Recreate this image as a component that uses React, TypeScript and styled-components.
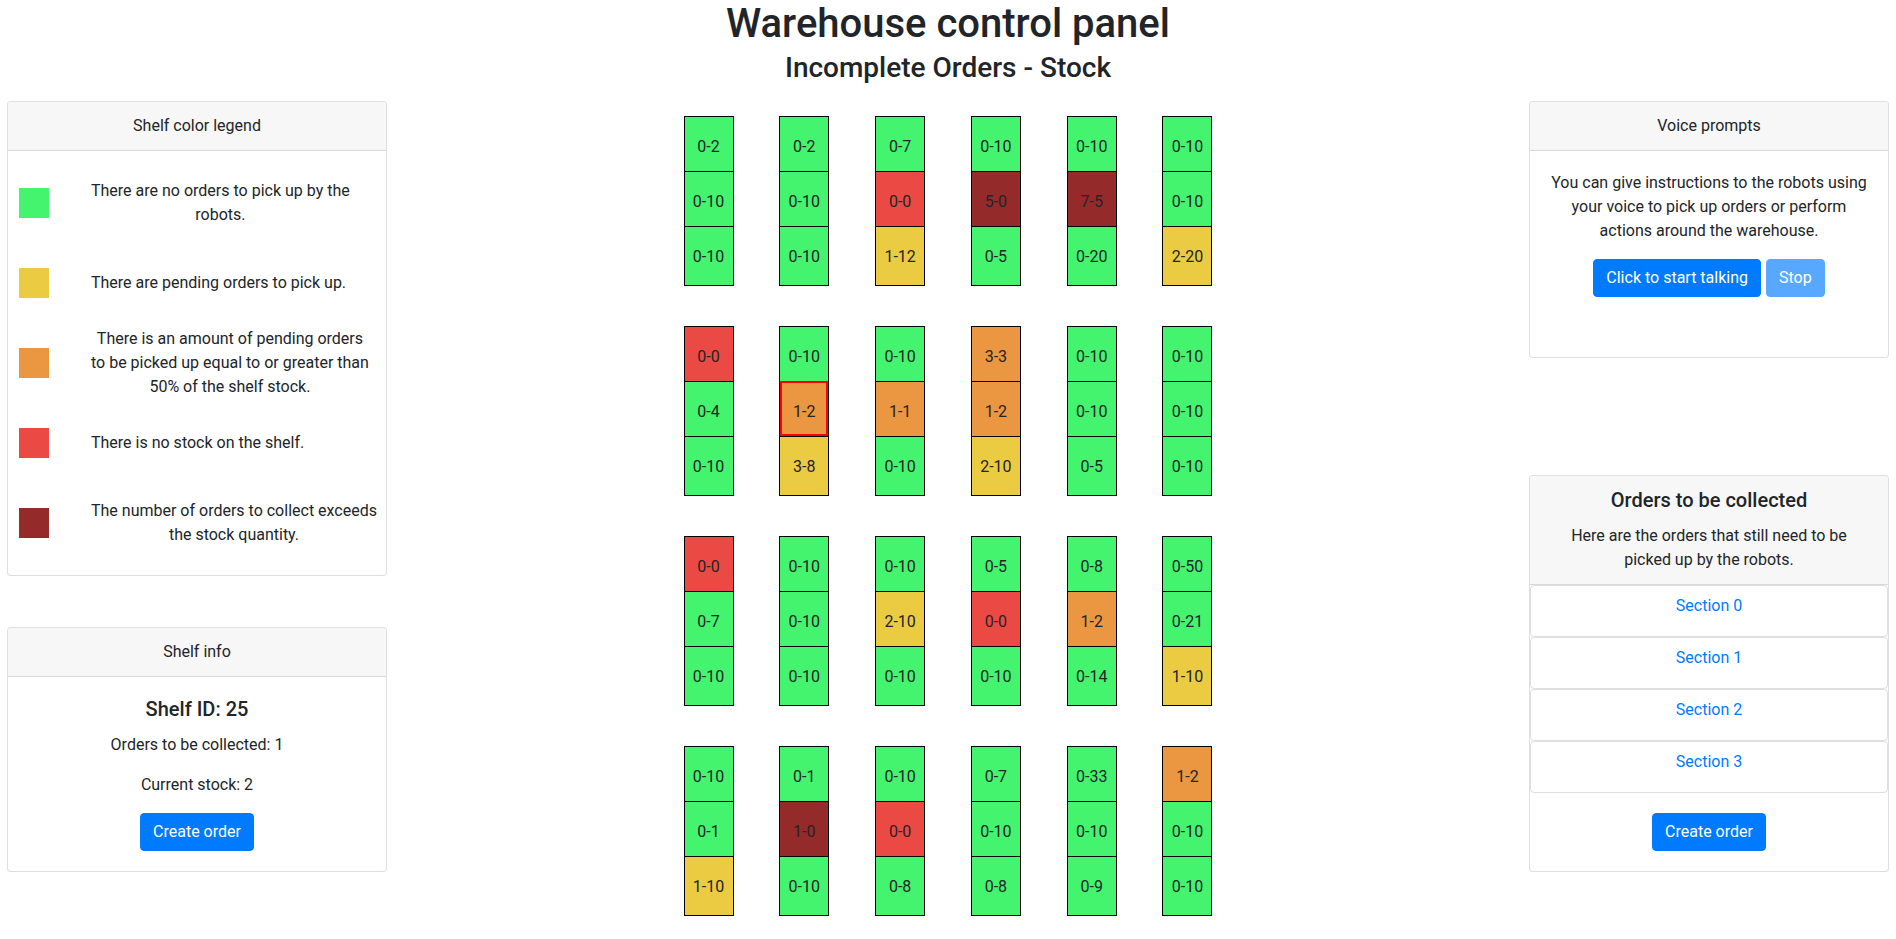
import React from "react";
import styled, { createGlobalStyle } from "styled-components";

const GlobalStyle = createGlobalStyle`
  html, body {
    margin: 0;
    padding: 0;
    background: #ffffff;
  }
  body {
    font-family: "Segoe UI", Roboto, "Liberation Sans", sans-serif;
    font-size: 16px;
    line-height: 24px;
    color: #212529;
  }
  * {
    box-sizing: border-box;
  }
`;

const COLORS = {
  green: "#44f46e",
  yellow: "#ebcb42",
  orange: "#eb9641",
  red: "#eb4943",
  darkRed: "#952a2b",
};

// [orders, stock] for each shelf: block -> column -> cell
const SHELVES: [number, number][][][] = [
  [
    [[0, 2], [0, 10], [0, 10]],
    [[0, 2], [0, 10], [0, 10]],
    [[0, 7], [0, 0], [1, 12]],
    [[0, 10], [5, 0], [0, 5]],
    [[0, 10], [7, 5], [0, 20]],
    [[0, 10], [0, 10], [2, 20]],
  ],
  [
    [[0, 0], [0, 4], [0, 10]],
    [[0, 10], [1, 2], [3, 8]],
    [[0, 10], [1, 1], [0, 10]],
    [[3, 3], [1, 2], [2, 10]],
    [[0, 10], [0, 10], [0, 5]],
    [[0, 10], [0, 10], [0, 10]],
  ],
  [
    [[0, 0], [0, 7], [0, 10]],
    [[0, 10], [0, 10], [0, 10]],
    [[0, 10], [2, 10], [0, 10]],
    [[0, 5], [0, 0], [0, 10]],
    [[0, 8], [1, 2], [0, 14]],
    [[0, 50], [0, 21], [1, 10]],
  ],
  [
    [[0, 10], [0, 1], [1, 10]],
    [[0, 1], [1, 0], [0, 10]],
    [[0, 10], [0, 0], [0, 8]],
    [[0, 7], [0, 10], [0, 8]],
    [[0, 33], [0, 10], [0, 9]],
    [[1, 2], [0, 10], [0, 10]],
  ],
];

const shelfColor = (orders: number, stock: number) => {
  if (orders > stock) return COLORS.darkRed;
  if (stock === 0) return COLORS.red;
  if (orders === 0) return COLORS.green;
  if (orders * 2 >= stock) return COLORS.orange;
  return COLORS.yellow;
};

const LEGEND = [
  { color: COLORS.green, lines: ["There are no orders to pick up by the", "robots."] },
  { color: COLORS.yellow, lines: ["There are pending orders to pick up."] },
  {
    color: COLORS.orange,
    lines: [
      "There is an amount of pending orders",
      "to be picked up equal to or greater than",
      "50% of the shelf stock.",
    ],
  },
  { color: COLORS.red, lines: ["There is no stock on the shelf."] },
  {
    color: COLORS.darkRed,
    lines: ["The number of orders to collect exceeds", "the stock quantity."],
  },
];

const VOICE_LINES = [
  "You can give instructions to the robots using",
  "your voice to pick up orders or perform",
  "actions around the warehouse.",
];

const Lines = ({ lines }: { lines: string[] }) => (
  <>
    {lines.map((line, i) => (
      <React.Fragment key={i}>
        {i > 0 && <br />}
        {line}
      </React.Fragment>
    ))}
  </>
);

const Page = styled.div`
  padding: 0 7px 20px;
`;

const Header = styled.header`
  text-align: center;
`;

const Title = styled.h1`
  margin: 0 0 4px;
  font-size: 40px;
  line-height: 47px;
  font-weight: 500;
`;

const Subtitle = styled.h3`
  margin: 0;
  font-size: 28px;
  line-height: 33.6px;
  font-weight: 500;
`;

const Layout = styled.main`
  display: grid;
  grid-template-columns: 1fr auto 1fr;
  align-items: start;
  margin-top: 16px;
`;

const SideColumn = styled.div<{ $align: "start" | "end"; $gap: number }>`
  display: flex;
  flex-direction: column;
  align-items: ${(p) => (p.$align === "start" ? "flex-start" : "flex-end")};
  gap: ${(p) => p.$gap}px;
`;

const Card = styled.section<{ $width: number }>`
  width: ${(p) => p.$width}px;
  border: 1px solid rgba(0, 0, 0, 0.125);
  border-radius: 4px;
  background: #fff;
  overflow: hidden;
`;

const CardHeader = styled.div`
  padding: 12px 20px;
  background: #f7f7f7;
  border-bottom: 1px solid rgba(0, 0, 0, 0.125);
  text-align: center;
`;

const CardBody = styled.div<{ $pad?: string }>`
  padding: ${(p) => p.$pad || "20px"};
  text-align: center;
`;

const CardTitle = styled.h5`
  margin: 0 0 12px;
  font-size: 20px;
  line-height: 24px;
  font-weight: 500;
`;

const Text = styled.p<{ $mb?: number }>`
  margin: 0 0 ${(p) => (p.$mb === undefined ? 16 : p.$mb)}px;
`;

const LegendList = styled.div`
  display: flex;
  flex-direction: column;
  gap: 16px;
`;

const LegendRow = styled.div`
  display: flex;
  align-items: center;
  height: 64px;
`;

const Swatch = styled.span<{ $color: string }>`
  flex-shrink: 0;
  width: 30px;
  height: 30px;
  margin-right: 42px;
  background: ${(p) => p.$color};
`;

const LegendText = styled.span`
  flex-shrink: 0;
  white-space: nowrap;
  text-align: center;
`;

const Button = styled.button<{ $disabled?: boolean }>`
  display: inline-block;
  padding: 6px 12px;
  font-family: inherit;
  font-size: 16px;
  line-height: 24px;
  color: #fff;
  background: #007bff;
  border: 1px solid #007bff;
  border-radius: 4px;
  opacity: ${(p) => (p.$disabled ? 0.65 : 1)};
  cursor: pointer;
`;

const ButtonRow = styled.div`
  display: flex;
  justify-content: center;
  gap: 5px;
  margin-bottom: 40px;
`;

const SectionItem = styled.div`
  padding: 8px 20px 18px;
  border: 1px solid rgba(0, 0, 0, 0.125);
  border-radius: 4px;
  text-align: center;
  color: #007bff;
`;

const Warehouse = styled.div`
  display: flex;
  flex-direction: column;
  gap: 40px;
  padding-top: 15px;
`;

const Block = styled.div`
  display: grid;
  grid-template-columns: repeat(6, 50px);
  column-gap: 45.8px;
`;

const Shelf = styled.div`
  display: flex;
  flex-direction: column;
  border: 1px solid #000;
`;

const Cell = styled.div<{ $color: string; $last: boolean; $selected: boolean }>`
  padding: 18px 0 ${(p) => (p.$last ? 16 : 12)}px;
  border-top: 1px solid #000;
  &:first-child {
    border-top: none;
  }
  background: ${(p) => p.$color};
  text-align: center;
  font-size: 16px;
  line-height: 24px;
  color: #212529;
  outline: ${(p) => (p.$selected ? "2px solid #ff0000" : "none")};
  outline-offset: -2px;
`;

const App = () => {
  return (
    <Page>
      <GlobalStyle />
      <Header>
        <Title>Warehouse control panel</Title>
        <Subtitle>Incomplete Orders - Stock</Subtitle>
      </Header>
      <Layout>
        <SideColumn $align="start" $gap={51}>
          <Card $width={380}>
            <CardHeader>Shelf color legend</CardHeader>
            <CardBody $pad="20px 11px">
              <LegendList>
                {LEGEND.map((item) => (
                  <LegendRow key={item.color}>
                    <Swatch $color={item.color} />
                    <LegendText>
                      <Lines lines={item.lines} />
                    </LegendText>
                  </LegendRow>
                ))}
              </LegendList>
            </CardBody>
          </Card>
          <Card $width={380}>
            <CardHeader>Shelf info</CardHeader>
            <CardBody>
              <CardTitle>Shelf ID: 25</CardTitle>
              <Text>Orders to be collected: 1</Text>
              <Text>Current stock: 2</Text>
              <Button>Create order</Button>
            </CardBody>
          </Card>
        </SideColumn>

        <Warehouse>
          {SHELVES.map((block, b) => (
            <Block key={b}>
              {block.map((shelf, s) => (
                <Shelf key={s}>
                  {shelf.map(([orders, stock], c) => (
                    <Cell
                      key={c}
                      $color={shelfColor(orders, stock)}
                      $last={c === shelf.length - 1}
                      $selected={b === 1 && s === 1 && c === 1}
                    >
                      {orders}-{stock}
                    </Cell>
                  ))}
                </Shelf>
              ))}
            </Block>
          ))}
        </Warehouse>

        <SideColumn $align="end" $gap={117}>
          <Card $width={360}>
            <CardHeader>Voice prompts</CardHeader>
            <CardBody>
              <Text>
                <Lines lines={VOICE_LINES} />
              </Text>
              <ButtonRow>
                <Button>Click to start talking</Button>
                <Button $disabled>Stop</Button>
              </ButtonRow>
            </CardBody>
          </Card>
          <Card $width={360}>
            <CardHeader>
              <CardTitle>Orders to be collected</CardTitle>
              <Text $mb={0}>
                Here are the orders that still need to be picked up by the
                robots.
              </Text>
            </CardHeader>
            {[0, 1, 2, 3].map((n) => (
              <SectionItem key={n}>Section {n}</SectionItem>
            ))}
            <CardBody>
              <Button>Create order</Button>
            </CardBody>
          </Card>
        </SideColumn>
      </Layout>
    </Page>
  );
};

export default App;
